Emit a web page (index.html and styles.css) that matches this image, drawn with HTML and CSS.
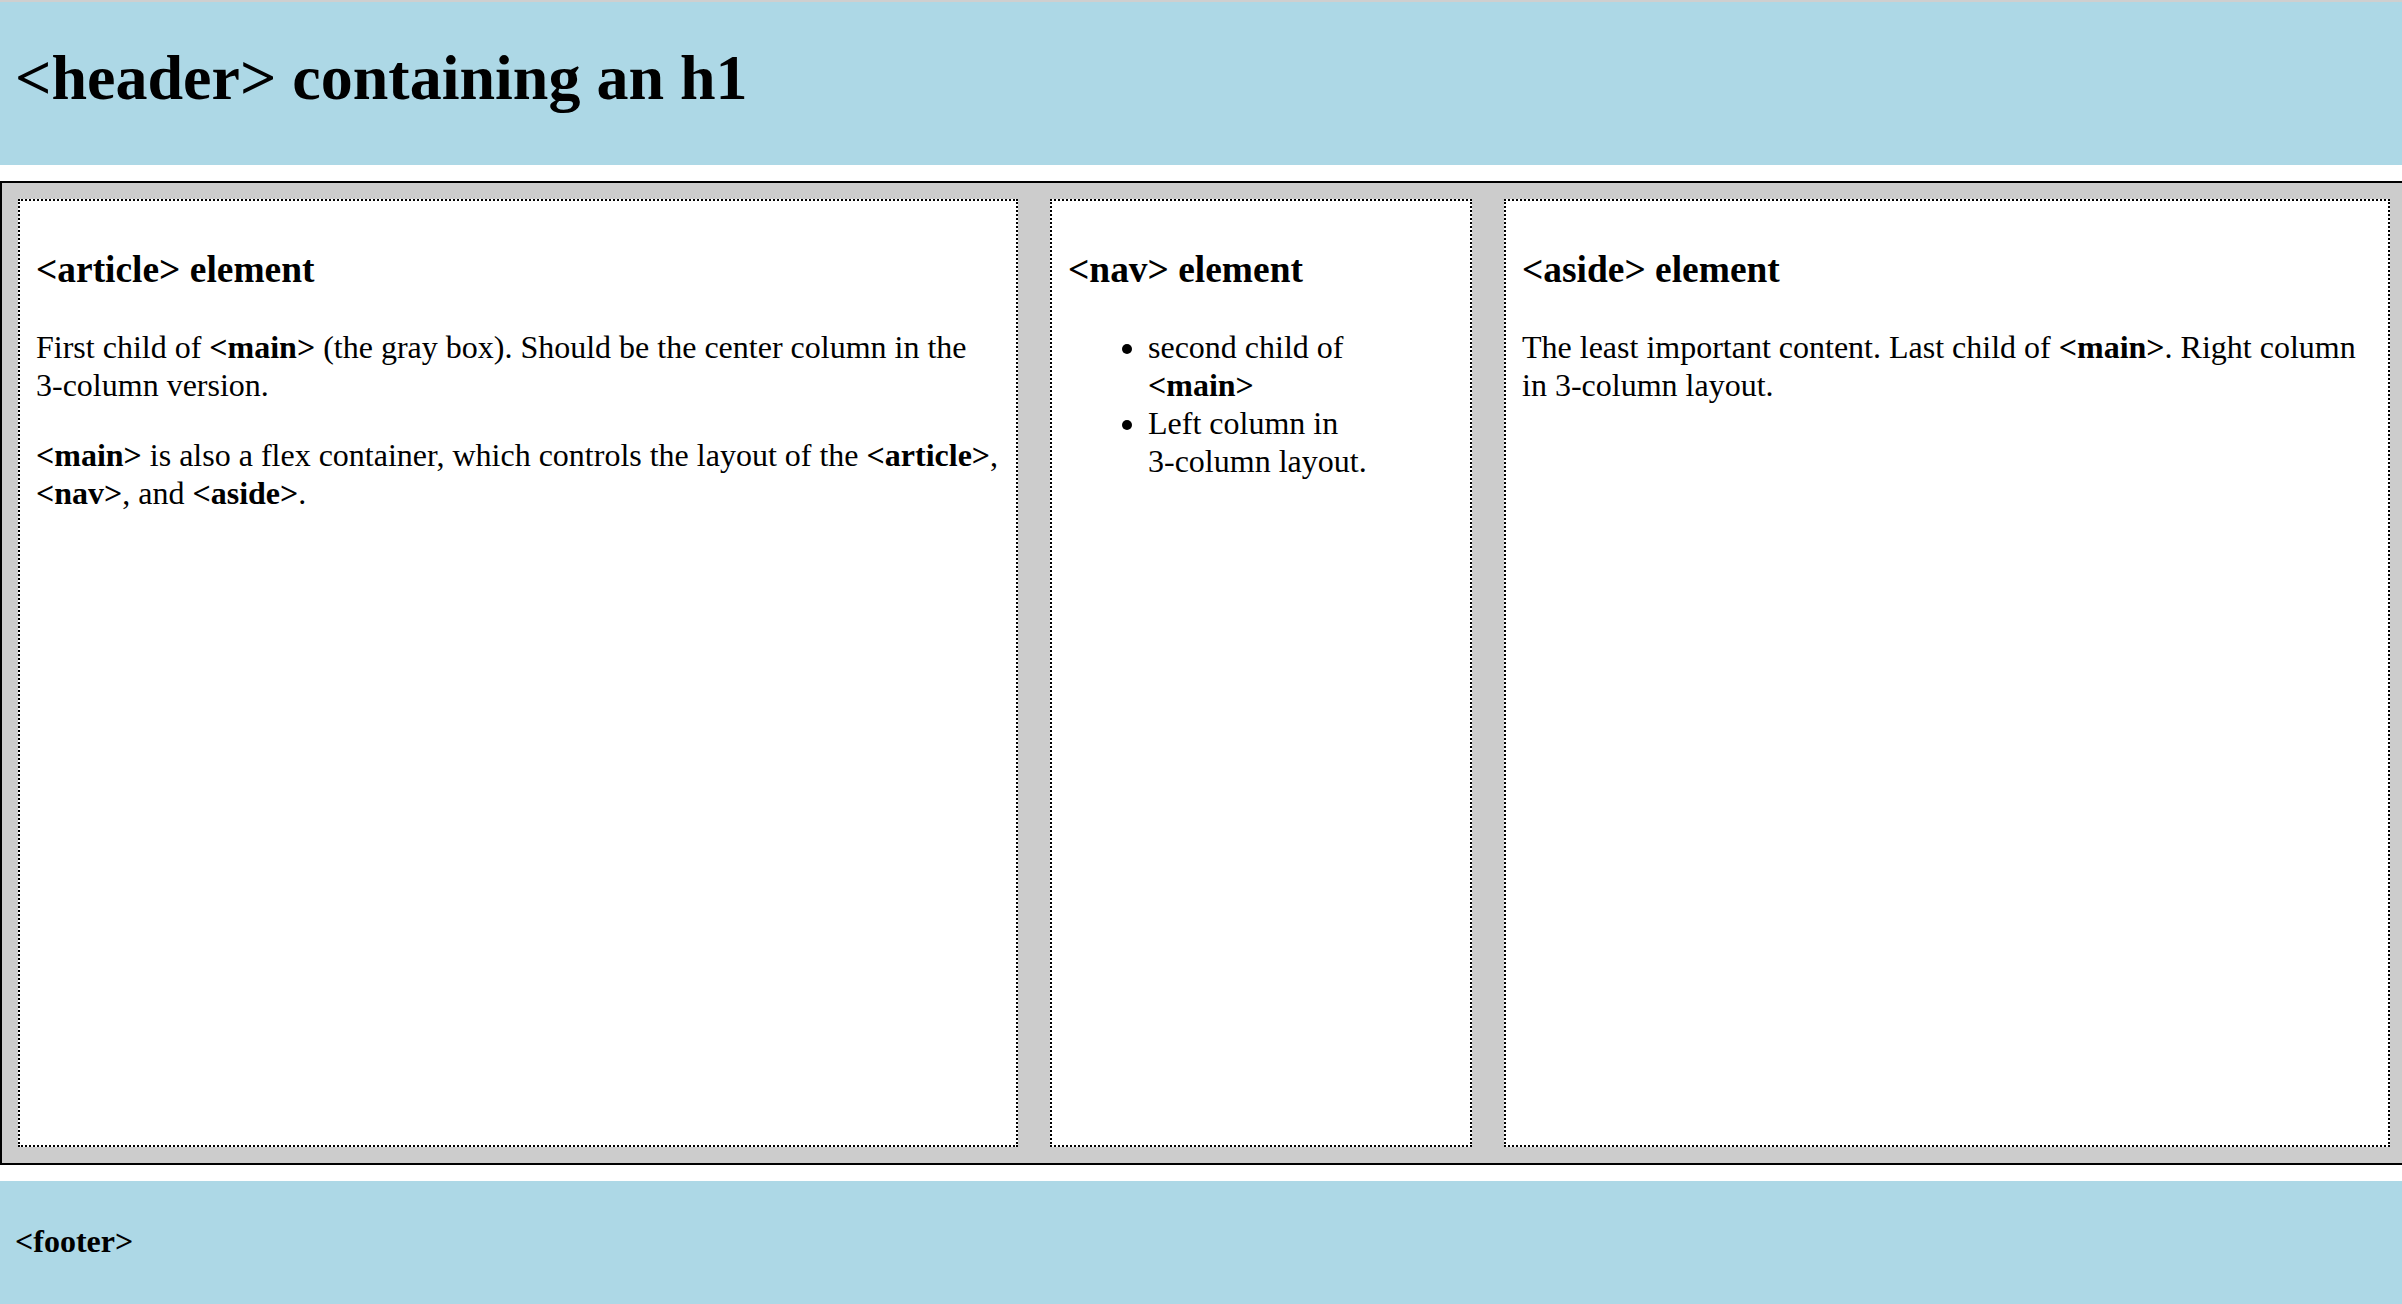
FILE: index.html
```html
<!DOCTYPE html>
<html lang="en">
<head>
<meta charset="utf-8">
<title>Flexbox layout</title>
<link rel="stylesheet" href="styles.css">
</head>
<body>
<header class="page-header">
  <h1 class="page-title">&lt;header&gt; containing an h1</h1>
</header>
<main class="page-main">
  <article class="col col-article">
    <h3 class="col-title">&lt;article&gt; element</h3>
    <p class="col-text">First child of <b>&lt;main&gt;</b> (the gray box). Should be the center column in the <span class="nowrap">3-column</span> version.</p>
    <p class="col-text"><b>&lt;main&gt;</b> is also a flex container, which controls the layout of the <b>&lt;article&gt;</b>, <b>&lt;nav&gt;</b>, and <b>&lt;aside&gt;</b>.</p>
  </article>
  <nav class="col col-nav">
    <h3 class="col-title">&lt;nav&gt; element</h3>
    <ul class="col-list">
      <li>second child of <b>&lt;main&gt;</b></li>
      <li>Left column in <span class="nowrap">3-column</span> layout.</li>
    </ul>
  </nav>
  <aside class="col col-aside">
    <h3 class="col-title">&lt;aside&gt; element</h3>
    <p class="col-text">The least important content. Last child of <b>&lt;main&gt;</b>. Right column in <span class="nowrap">3-column</span> layout.</p>
  </aside>
</main>
<footer class="page-footer">
  <h4 class="footer-title">&lt;footer&gt;</h4>
</footer>
</body>
</html>
```
FILE: styles.css
```css
html, body {
  margin: 0;
  padding: 0;
  overflow: hidden;
}

body {
  font-family: "Liberation Serif", "Times New Roman", serif;
  font-size: 32px;
  line-height: 38px;
  color: #000;
  background: #fff;
  border-top: 2px solid #cfcfcf;
}

.nowrap {
  white-space: nowrap;
}

.page-header {
  background: #add8e6;
  padding: 39px 16px 50px 15px;
}

.page-title {
  margin: 0;
  font-size: 64px;
  line-height: 74px;
  font-weight: bold;
}

.page-main {
  display: flex;
  gap: 32px;
  margin: 16px 0;
  height: 984px;
  box-sizing: border-box;
  background: #ccc;
  border: 2px solid #000;
  border-right: none;
  padding: 16px 12px 16px 16px;
}

.col {
  box-sizing: border-box;
  background: #fff;
  border: 2px dotted #000;
  padding: 16px;
}

.col-article {
  flex: 0 0 1000px;
}

.col-nav {
  flex: 0 0 422px;
}

.col-aside {
  flex: 1 1 auto;
  min-width: 0;
}

.col-title {
  margin: 31px 0 36px;
  font-size: 37.44px;
  line-height: 44px;
  font-weight: bold;
}

.col-text {
  margin: 32px 0;
}

.col-list {
  margin: 32px 0;
  padding-left: 80px;
}

.page-footer {
  background: #add8e6;
  padding: 41px 15px 44px;
}

.footer-title {
  margin: 0;
  font-size: 32px;
  line-height: 38px;
  font-weight: bold;
}
```
